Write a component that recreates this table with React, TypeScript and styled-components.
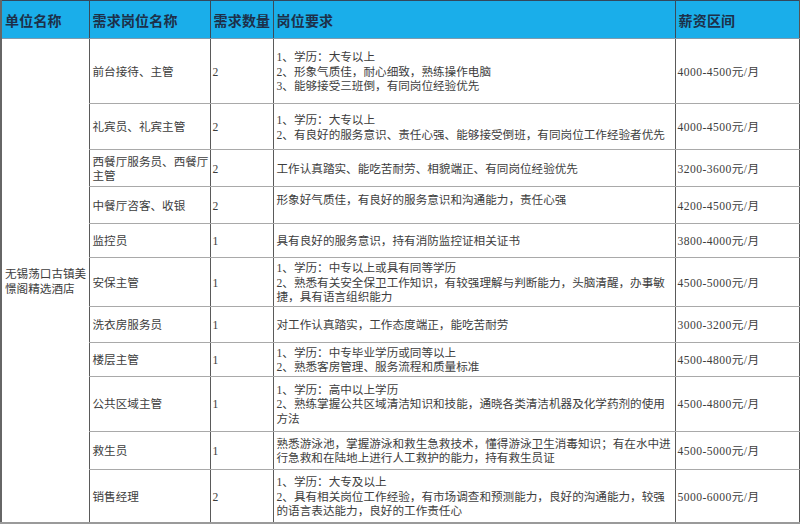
import React from "react";
import styled, { createGlobalStyle } from "styled-components";

const GlobalStyle = createGlobalStyle`
  html, body {
    margin: 0;
    padding: 0;
    background: #ffffff;
  }
  body {
    font-family: "Liberation Serif", "Noto Sans CJK SC", serif;
  }
`;

type Job = {
  name: string[];
  count: string;
  req: string[];
  pay: string;
  h: number;
  lift?: boolean;
};

const widths = [88, 121, 63, 402, 124];

const jobs: Job[] = [
  {
    name: ["前台接待、主管"],
    count: "2",
    req: [
      "1、学历：大专以上",
      "2、形象气质佳，耐心细致，熟练操作电脑",
      "3、能够接受三班倒，有同岗位经验优先",
    ],
    pay: "4000-4500元/月",
    h: 65,
  },
  {
    name: ["礼宾员、礼宾主管"],
    count: "2",
    req: [
      "1、学历：大专以上",
      "2、有良好的服务意识、责任心强、能够接受倒班，有同岗位工作经验者优先",
    ],
    pay: "4000-4500元/月",
    h: 46,
  },
  {
    name: ["西餐厅服务员、西餐厅", "主管"],
    count: "2",
    req: ["工作认真踏实、能吃苦耐劳、相貌端正、有同岗位经验优先"],
    pay: "3200-3600元/月",
    h: 37,
  },
  {
    name: ["中餐厅咨客、收银"],
    count: "2",
    req: ["形象好气质佳，有良好的服务意识和沟通能力，责任心强"],
    pay: "4200-4500元/月",
    h: 37,
    lift: true,
  },
  {
    name: ["监控员"],
    count: "1",
    req: ["具有良好的服务意识，持有消防监控证相关证书"],
    pay: "3800-4000元/月",
    h: 34,
  },
  {
    name: ["安保主管"],
    count: "1",
    req: [
      "1、学历：中专以上或具有同等学历",
      "2、熟悉有关安全保卫工作知识，有较强理解与判断能力，头脑清醒，办事敏",
      "捷，具有语言组织能力",
    ],
    pay: "4500-5000元/月",
    h: 48,
  },
  {
    name: ["洗衣房服务员"],
    count: "1",
    req: ["对工作认真踏实，工作态度端正，能吃苦耐劳"],
    pay: "3000-3200元/月",
    h: 36,
  },
  {
    name: ["楼层主管"],
    count: "1",
    req: ["1、学历：中专毕业学历或同等以上", "2、熟悉客房管理、服务流程和质量标准"],
    pay: "4500-4800元/月",
    h: 34,
  },
  {
    name: ["公共区域主管"],
    count: "1",
    req: [
      "1、学历：高中以上学历",
      "2、熟练掌握公共区域清洁知识和技能，通晓各类清洁机器及化学药剂的使用",
      "方法",
    ],
    pay: "4500-4800元/月",
    h: 55,
  },
  {
    name: ["救生员"],
    count: "1",
    req: [
      "熟悉游泳池，掌握游泳和救生急救技术，懂得游泳卫生消毒知识；有在水中进",
      "行急救和在陆地上进行人工救护的能力，持有救生员证",
    ],
    pay: "4500-5000元/月",
    h: 38,
  },
  {
    name: ["销售经理"],
    count: "2",
    req: [
      "1、学历：大专及以上",
      "2、具有相关岗位工作经验，有市场调查和预测能力，良好的沟通能力，较强",
      "的语言表达能力，良好的工作责任心",
    ],
    pay: "5000-6000元/月",
    h: 54,
  },
];

const Sheet = styled.table`
  width: 798px;
  border-collapse: collapse;
  table-layout: fixed;
  border-top: 1px solid #33475c;
  border-left: 2px solid #666;
  border-right: 1px solid #555;
  border-bottom: 2px solid #9a9a9a;
`;

const Col = styled.col<{ $w: number }>`
  width: ${(p) => p.$w}px;
`;

const HeadRow = styled.tr`
  height: 38px;
  background: #1aaeea;
`;

const HeadCell = styled.th`
  padding: 1px 0 0 3px;
  text-align: left;
  vertical-align: middle;
  font-size: 14px;
  font-weight: 700;
  color: #1d3049;
  letter-spacing: 0.2px;
  border-left: 1px solid #3b4a58;
  border-bottom: 1px solid #7f9aae;
  white-space: nowrap;
  overflow: hidden;
`;

const Row = styled.tr<{ $h: number }>`
  height: ${(p) => p.$h}px;
`;

const Cell = styled.td<{ $lift?: boolean; $pad?: number; $num?: boolean }>`
  padding: ${(p) => (p.$lift ? "0 0 8px" : "4px 0 0")} ${(p) => p.$pad ?? 3}px;
  vertical-align: middle;
  font-size: 11.6px;
  line-height: 14.5px;
  letter-spacing: ${(p) => (p.$num ? "0.45px" : "0")};
  color: #3d3d3d;
  white-space: nowrap;
  overflow: hidden;
  border-left: 1px solid #5a5a5a;
  border-bottom: 1px solid #a9a9a9;
`;

const Line = styled.div`
  min-height: 14.5px;
`;

export default function App() {
  return (
    <>
      <GlobalStyle />
      <Sheet>
        <colgroup>
          {widths.map((w, i) => (
            <Col key={i} $w={w} />
          ))}
        </colgroup>
        <thead>
          <HeadRow>
            <HeadCell>单位名称</HeadCell>
            <HeadCell>需求岗位名称</HeadCell>
            <HeadCell>需求数量</HeadCell>
            <HeadCell>岗位要求</HeadCell>
            <HeadCell>薪资区间</HeadCell>
          </HeadRow>
        </thead>
        <tbody>
          {jobs.map((job, i) => (
            <Row key={i} $h={job.h}>
              {i === 0 && (
                <Cell rowSpan={jobs.length}>
                  <Line>无锡荡口古镇美</Line>
                  <Line>憬阁精选酒店</Line>
                </Cell>
              )}
              <Cell>
                {job.name.map((n) => (
                  <Line key={n}>{n}</Line>
                ))}
              </Cell>
              <Cell $pad={2}>{job.count}</Cell>
              <Cell $lift={job.lift}>
                {job.req.map((r) => (
                  <Line key={r}>{r}</Line>
                ))}
              </Cell>
              <Cell $pad={2} $num>
                {job.pay}
              </Cell>
            </Row>
          ))}
        </tbody>
      </Sheet>
    </>
  );
}
